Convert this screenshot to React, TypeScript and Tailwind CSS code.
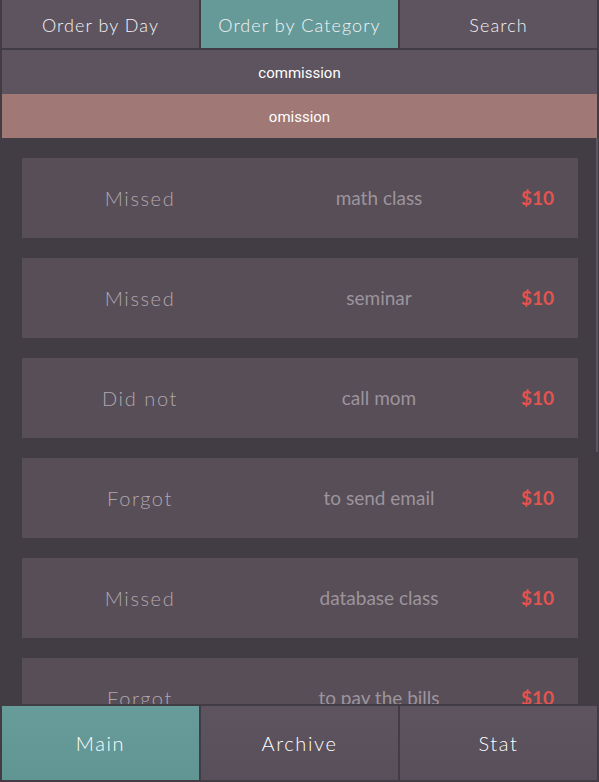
import React from "react";

const items = [
  ["Missed", "math class"],
  ["Missed", "seminar"],
  ["Did not", "call mom"],
  ["Forgot", "to send email"],
  ["Missed", "database class"],
  ["Forgot", "to pay the bills"],
];

function Tab({ label, active }: { label: string; active?: boolean }) {
  return (
    <div
      className={
        (active ? "bg-[#669a99] " : "bg-[#5d545f] ") +
        "flex-1 flex items-center justify-center pt-[2px] font-['Lato',sans-serif] text-[18px] font-light tracking-[0.06em] text-[#f5f2f5]"
      }
    >
      {label}
    </div>
  );
}

function NavButton({ label, active }: { label: string; active?: boolean }) {
  return (
    <div
      className={
        (active ? "from-[#689c9b] to-[#619594] " : "from-[#5d545f] to-[#584f5a] ") +
        "flex-1 bg-gradient-to-b flex items-center justify-center font-['Lato',sans-serif] text-[20px] font-light tracking-[0.08em] text-white"
      }
    >
      {label}
    </div>
  );
}

export default function App() {
  return (
    <div className="w-[599px] h-[782px] bg-[#423c44] flex flex-col overflow-hidden relative">
      <div className="flex gap-[2px] px-[2px] h-[48px]">
        <Tab label="Order by Day" />
        <Tab label="Order by Category" active />
        <Tab label="Search" />
      </div>
      <div className="px-[2px] pt-[2px] font-['Roboto',sans-serif] text-[15px] text-white">
        <div className="h-[44px] bg-[#5d545f] flex items-center justify-center pt-[2px]">commission</div>
        <div className="h-[44px] bg-[#a07875] flex items-center justify-center pt-[2px]">omission</div>
      </div>
      <div className="relative flex-1 overflow-hidden pt-[20px] pl-[22px] pr-[21px] flex flex-col gap-[20px]">
        {items.map(([a, b], i) => (
          <div key={i} className="h-[80px] shrink-0 bg-[#574e57] grid grid-cols-[236px_242px_1fr] items-center">
            <div className="text-center font-['Lato',sans-serif] text-[20px] font-light tracking-[0.08em] text-[#b0a8b0]">{a}</div>
            <div className="text-center font-['Lato',sans-serif] text-[19px] text-[#9d949d]">{b}</div>
            <div className="text-right pr-[24px] font-['Lato',sans-serif] text-[19px] font-bold text-[#e6534f]">$10</div>
          </div>
        ))}
        <div className="absolute right-[1px] top-0 w-[2px] h-[314px] bg-[#5c5460]" />
      </div>
      <div className="absolute left-0 bottom-0 w-full h-[78px] bg-[#423c44] flex gap-[2px] p-[2px]">
        <NavButton label="Main" active />
        <NavButton label="Archive" />
        <NavButton label="Stat" />
      </div>
    </div>
  );
}
